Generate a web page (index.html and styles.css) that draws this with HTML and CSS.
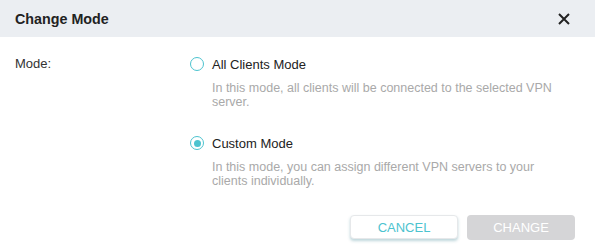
FILE: index.html
```html
<!DOCTYPE html>
<html lang="en">
<head>
  <meta charset="UTF-8" />
  <title>Change Mode</title>
  <link rel="stylesheet" href="styles.css">
</head>
<body>

  <div class="dialog">
    <div class="dialog-head">
      <span class="dialog-title">Change Mode</span>
      <button class="close" aria-label="Close">
        <svg width="12" height="12" viewBox="0 0 12 12">
          <path d="M1 1 L11 11 M11 1 L1 11" stroke="#222" stroke-width="2" fill="none" />
        </svg>
      </button>
    </div>

    <div class="dialog-body">
      <div class="field">
        <div class="field-label">Mode:</div>
        <div class="field-control">
          <label class="option">
            <span class="radio"></span>
            <span class="option-text">All Clients Mode</span>
          </label>
          <p class="option-desc">In this mode, all clients will be connected to the selected VPN server.</p>

          <label class="option second">
            <span class="radio checked"></span>
            <span class="option-text">Custom Mode</span>
          </label>
          <p class="option-desc">In this mode, you can assign different VPN servers to your clients individually.</p>
        </div>
      </div>
    </div>

    <div class="dialog-foot">
      <button class="btn btn-cancel">CANCEL</button>
      <button class="btn btn-change" disabled>CHANGE</button>
    </div>
  </div>

</body>
</html>
```

FILE: styles.css
```css
body {
  margin: 0;
  background: #fff;
  font-family: 'Liberation Sans', Arial, sans-serif;
  color: #333;
}

.dialog {
  width: 595px;
  height: 248px;
  background: #fff;
}

.dialog-head {
  height: 37px;
  background: #ebeef2;
  display: flex;
  align-items: center;
  justify-content: space-between;
  padding: 0 25px 0 15px;
}

.dialog-title {
  font-size: 14.3px;
  font-weight: bold;
  color: #222;
}

.close {
  border: none;
  background: none;
  padding: 0;
  width: 12px;
  height: 12px;
  display: flex;
  cursor: pointer;
}

.dialog-body {
  padding: 17px 30px 0 15px;
}

.field {
  display: flex;
}

.field-label {
  width: 175px;
  font-size: 13px;
  line-height: 20px;
  color: #333;
}

.field-control {
  flex: 1;
}

.option {
  display: flex;
  align-items: center;
  height: 20px;
  font-size: 13px;
  color: #222;
  cursor: pointer;
}

.option.second {
  margin-top: 24px;
}

.radio {
  width: 14px;
  height: 14px;
  box-sizing: border-box;
  border: 1.5px solid #4cc3cf;
  border-radius: 50%;
  margin-right: 8px;
  display: flex;
  align-items: center;
  justify-content: center;
}

.radio.checked::after {
  content: '';
  width: 7px;
  height: 7px;
  border-radius: 50%;
  background: #4cc3cf;
}

.option-desc {
  margin: 7px 0 0 22px;
  font-size: 12.5px;
  line-height: 14px;
  color: #a9a9a9;
}

.dialog-foot {
  display: flex;
  justify-content: flex-end;
  gap: 9px;
  padding: 27px 20px 0 0;
}

.btn {
  width: 108px;
  height: 24px;
  border-radius: 4px;
  font-family: inherit;
  font-size: 13px;
  padding: 0;
}

.btn-cancel {
  background: #fff;
  color: #4cc3cf;
  border: 1px solid #e6e8ea;
  box-shadow: 0 2px 3px rgba(40, 120, 135, 0.3);
  cursor: pointer;
}

.btn-change {
  background: #d5d5d7;
  color: #fff;
  border: none;
  height: 25px;
}
```
